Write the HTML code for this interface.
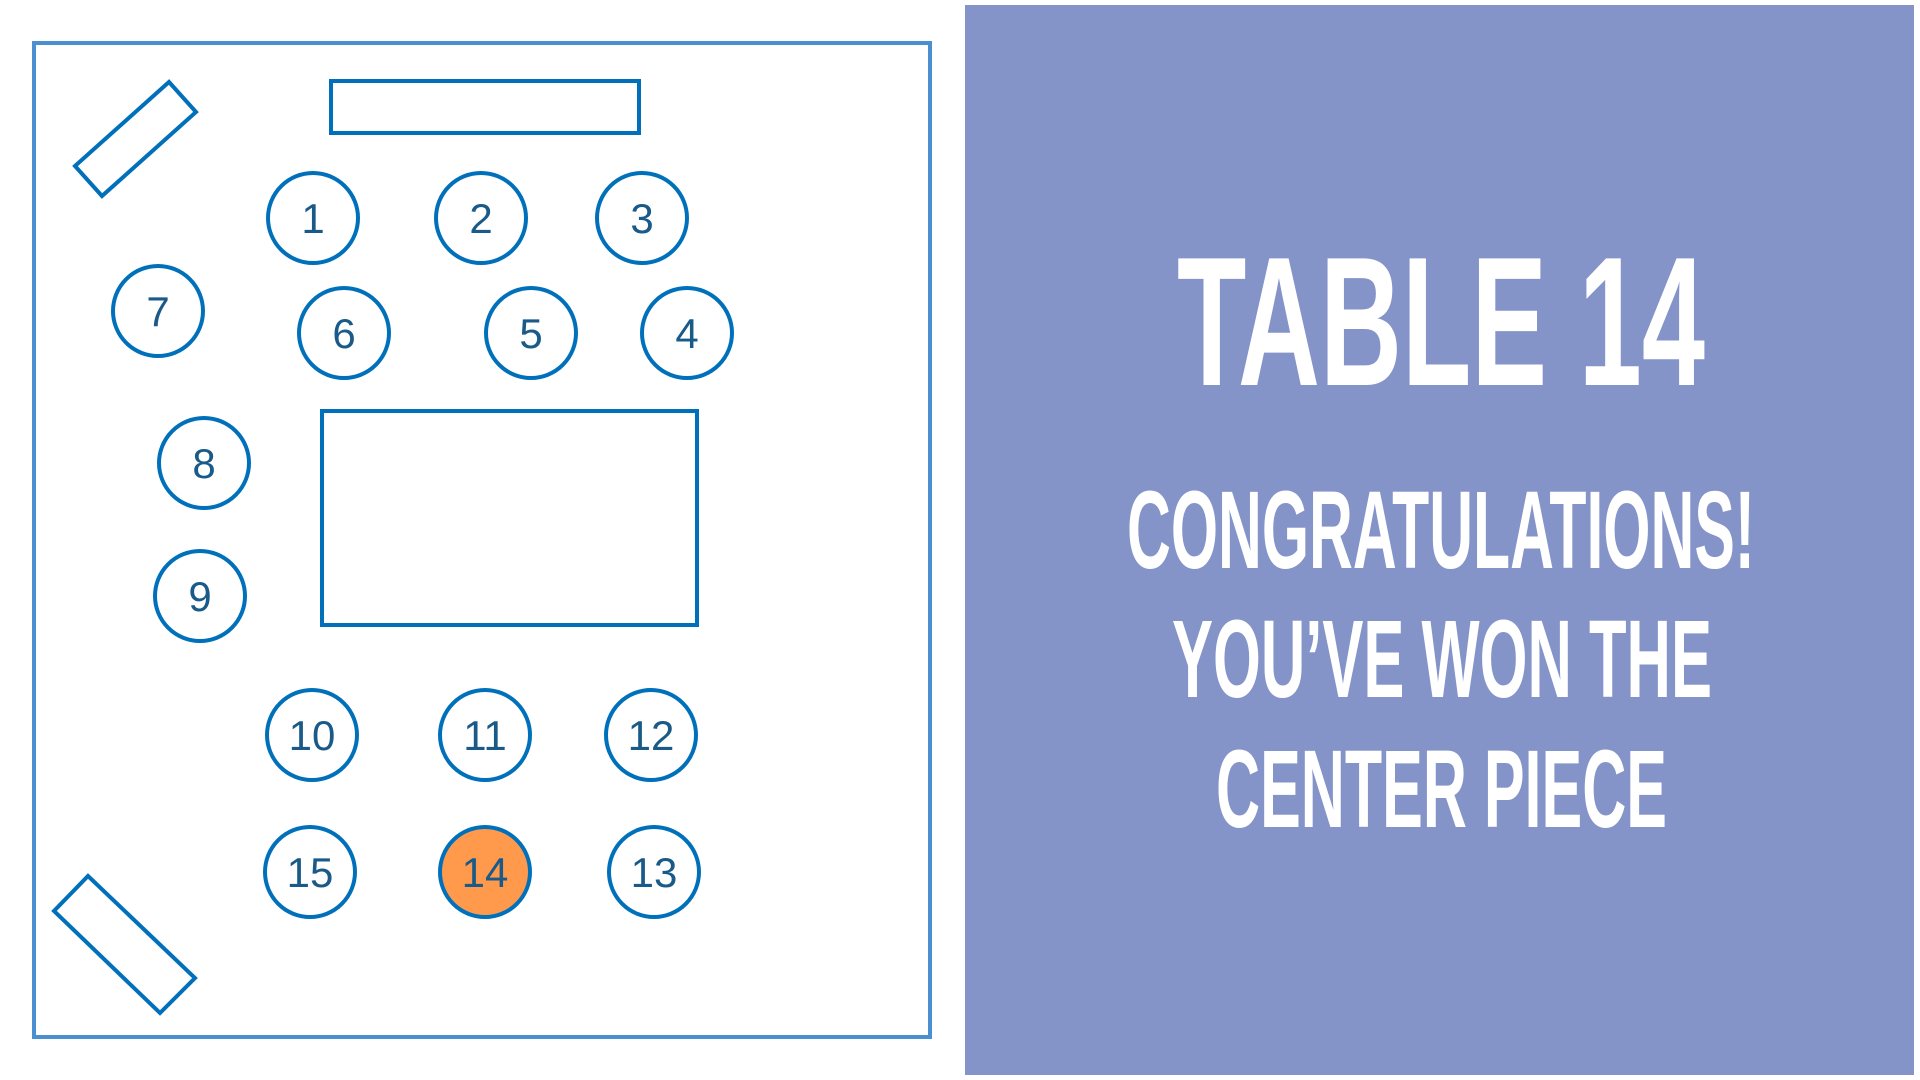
<!DOCTYPE html>
<html><head><meta charset="utf-8"><style>
html,body{margin:0;padding:0;background:#fff;width:1920px;height:1080px;overflow:hidden}
svg{display:block}
</style></head><body>
<svg width="1920" height="1080" viewBox="0 0 1920 1080" xmlns="http://www.w3.org/2000/svg">
<rect x="0" y="0" width="1920" height="1080" fill="#fff"/>
<rect x="34" y="43" width="896" height="994" fill="none" stroke="#4a8fcf" stroke-width="4"/>
<rect x="965" y="5" width="949" height="1070" fill="#8493c8"/>
<g fill="none" stroke="#0070bb" stroke-width="4">
<rect x="331" y="81" width="308" height="52"/>
<polygon points="169,82 196,112 102,196 75,166"/>
<polygon points="88,876 195,978 160,1013 54,911"/>
<rect x="322" y="411" width="375" height="214"/>
</g>
<g stroke="#0070bb" stroke-width="4" fill="#fff">
<circle cx="313" cy="218" r="45"/>
<circle cx="481" cy="218" r="45"/>
<circle cx="642" cy="218" r="45"/>
<circle cx="158" cy="311" r="45"/>
<circle cx="344" cy="333" r="45"/>
<circle cx="531" cy="333" r="45"/>
<circle cx="687" cy="333" r="45"/>
<circle cx="204" cy="463" r="45"/>
<circle cx="200" cy="596" r="45"/>
<circle cx="312" cy="735" r="45"/>
<circle cx="485" cy="735" r="45"/>
<circle cx="651" cy="735" r="45"/>
<circle cx="310" cy="872" r="45"/>
<circle cx="485" cy="872" r="45" fill="#ff9a4d"/>
<circle cx="654" cy="872" r="45"/>
</g>
<g font-family="Liberation Sans, sans-serif" font-size="42" fill="#1a5a88" text-anchor="middle">
<text x="313" y="233">1</text>
<text x="481" y="233">2</text>
<text x="642" y="233">3</text>
<text x="158" y="326">7</text>
<text x="344" y="348">6</text>
<text x="531" y="348">5</text>
<text x="687" y="348">4</text>
<text x="204" y="478">8</text>
<text x="200" y="611">9</text>
<text x="312" y="750">10</text>
<text x="485" y="750">11</text>
<text x="651" y="750">12</text>
<text x="310" y="887">15</text>
<text x="485" y="887">14</text>
<text x="654" y="887">13</text>
</g>
<g font-family="Liberation Sans, sans-serif" font-weight="bold" fill="#fff">
<text x="1177" y="385" font-size="184" textLength="528" lengthAdjust="spacingAndGlyphs">TABLE 14</text>
<text x="1127" y="568" font-size="110" textLength="628" lengthAdjust="spacingAndGlyphs">CONGRATULATIONS!</text>
<text x="1172" y="697" font-size="110" textLength="540" lengthAdjust="spacingAndGlyphs">YOU’VE WON THE</text>
<text x="1216" y="827" font-size="110" textLength="451" lengthAdjust="spacingAndGlyphs">CENTER PIECE</text>
</g>
</svg>
</body></html>
